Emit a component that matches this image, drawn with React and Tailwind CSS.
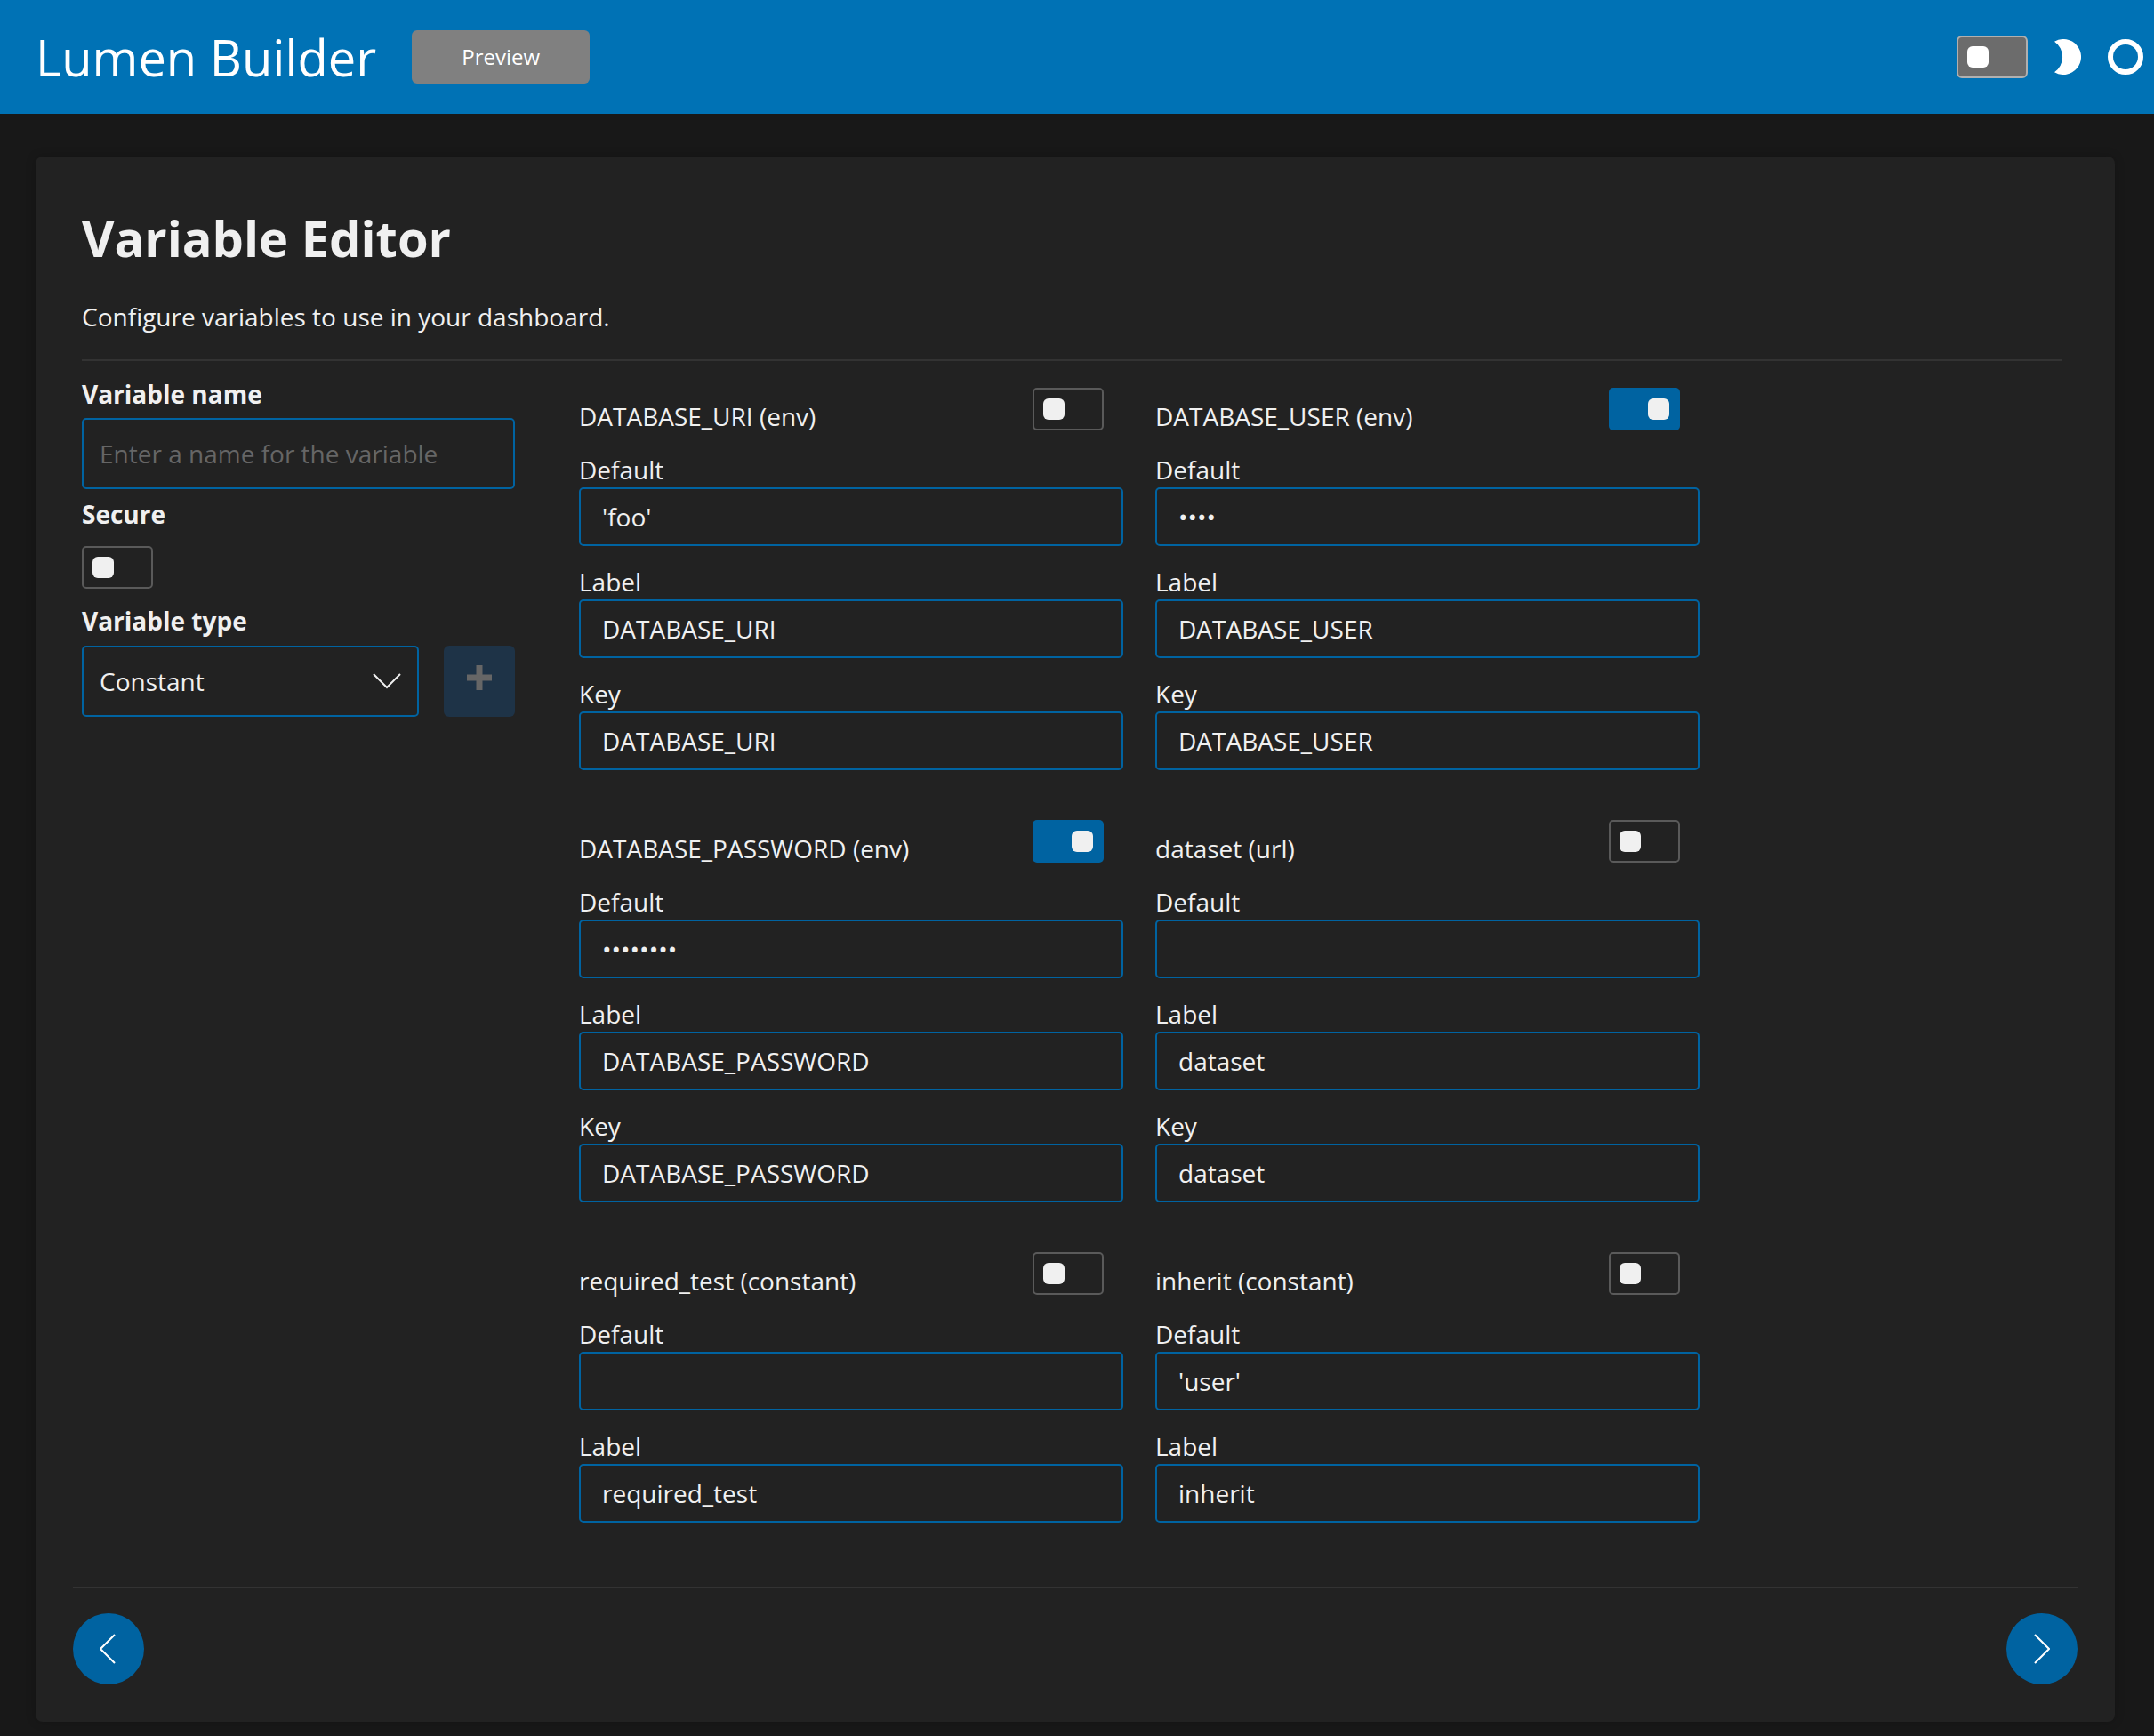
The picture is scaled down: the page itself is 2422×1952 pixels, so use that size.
import React from "react";

const variables = [
  { title: "DATABASE_URI (env)", on: false, fields: [["Default", "'foo'"], ["Label", "DATABASE_URI"], ["Key", "DATABASE_URI"]] },
  { title: "DATABASE_USER (env)", on: true, secret: true, fields: [["Default", "user"], ["Label", "DATABASE_USER"], ["Key", "DATABASE_USER"]] },
  { title: "DATABASE_PASSWORD (env)", on: true, secret: true, fields: [["Default", "password"], ["Label", "DATABASE_PASSWORD"], ["Key", "DATABASE_PASSWORD"]] },
  { title: "dataset (url)", on: false, fields: [["Default", ""], ["Label", "dataset"], ["Key", "dataset"]] },
  { title: "required_test (constant)", on: false, fields: [["Default", ""], ["Label", "required_test"]] },
  { title: "inherit (constant)", on: false, fields: [["Default", "'user'"], ["Label", "inherit"]] },
];

function Toggle({ on = false, className = "" }) {
  return (
    <div
      className={`flex h-[48px] w-[80px] shrink-0 items-center rounded-[5px] ${
        on ? "justify-end bg-[#0063a1] px-[12px]" : "justify-start border-2 border-[#5a5a5a] px-[10px]"
      } ${className}`}
    >
      <div className="h-[24px] w-[24px] rounded-[6px] bg-[#f0f0f0]" />
    </div>
  );
}

function VariableCard({ variable }) {
  return (
    <div className="mb-[34px] flex flex-col">
      <div className="flex h-[48px] items-end justify-between pr-[22px]">
        <span className="leading-[32px]">{variable.title}</span>
        <Toggle on={variable.on} className="self-start" />
      </div>
      <div className="mt-[26px] flex flex-col">
        {variable.fields.map(([label, value]) => (
          <div key={label} className="mb-[22px] flex flex-col">
            <label className="h-[38px] leading-[36px]">{label}</label>
            <input
              readOnly
              type={variable.secret && label === "Default" ? "password" : "text"}
              value={value}
              className="h-[66px] w-full rounded-[5px] border-2 border-[#0063a1] bg-transparent px-[24px] text-[#f0f0f0] outline-none"
            />
          </div>
        ))}
      </div>
    </div>
  );
}

export default function App() {
  return (
    <div className="min-h-[1952px] bg-[#181818] font-['Open_Sans',sans-serif] text-[28px] text-[#f0f0f0]">
      <header className="flex h-[128px] items-center bg-[#0072b5] pl-[40px] pr-[12px] text-white">
        <h1 className="text-[56px] font-normal leading-none">Lumen Builder</h1>
        <button className="ml-[40px] h-[60px] w-[200px] rounded-[6px] bg-[#808080] text-[24px] text-white">Preview</button>
        <div className="ml-auto flex items-center">
          <div className="flex h-[48px] w-[80px] items-center rounded-[6px] border-2 border-[#b0b0b0] bg-[#6c6c6c] px-[10px]">
            <div className="h-[24px] w-[24px] rounded-[6px] bg-white" />
          </div>
          <svg width="30" height="40" viewBox="0 0 30 40" className="ml-[30px]">
            <path d="M0 2.7A20 20 0 1 1 0 37.3A21 21 0 0 0 0 2.7Z" fill="#fff" />
          </svg>
          <div className="ml-[30px] h-[40px] w-[40px] rounded-full border-[6px] border-white" />
        </div>
      </header>

      <main className="ml-[40px] mr-[44px] mt-[48px] mb-[16px] flex h-[1760px] flex-col rounded-[8px] bg-[#222222] shadow-[0_0_12px_rgba(0,0,0,0.2)]">
        <div className="flex-1 pl-[52px] pr-[60px]">
          <h2 className="mt-[58px] text-[56px] font-bold leading-[66px]">Variable Editor</h2>
          <p className="mt-[37px] leading-[38px]">Configure variables to use in your dashboard.</p>
          <div className="mt-[29px] h-[2px] w-full bg-[#333333]" />

          <div className="mt-[18px] flex gap-[72px]">
            <div className="w-[487px] shrink-0">
              <div className="h-[38px] font-bold leading-[38px]">Variable name</div>
              <input
                placeholder="Enter a name for the variable"
                className="mt-[8px] h-[80px] w-full rounded-[5px] border-2 border-[#0063a1] bg-transparent px-[18px] outline-none placeholder:text-[#666666]"
              />
              <div className="mt-[9px] h-[38px] font-bold leading-[38px]">Secure</div>
              <Toggle className="mt-[17px]" />
              <div className="mt-[17px] h-[38px] font-bold leading-[38px]">Variable type</div>
              <div className="mt-[9px] flex gap-[28px]">
                <div className="flex h-[80px] flex-1 items-center justify-between rounded-[5px] border-2 border-[#0063a1] pl-[18px] pr-[18px]">
                  <span>Constant</span>
                  <svg width="32" height="18" viewBox="0 0 32 18" fill="none" stroke="#f0f0f0" strokeWidth="2">
                    <path d="M1 1L16 16L31 1" />
                  </svg>
                </div>
                <button className="flex h-[80px] w-[80px] items-start justify-center rounded-[6px] bg-[#1e3347] pt-[22px]">
                  <svg width="28" height="28" viewBox="0 0 28 28" fill="#666666">
                    <path d="M10.5 0h7v10.5H28v7H17.5V28h-7V17.5H0v-7h10.5z" />
                  </svg>
                </button>
              </div>
            </div>

            <div className="grid grid-cols-[612px_612px] gap-x-[36px] pt-[12px]">
              {variables.map((variable) => (
                <VariableCard key={variable.title} variable={variable} />
              ))}
            </div>
          </div>
        </div>

        <div className="mx-[42px] mb-[42px] border-t-2 border-[#333333] pt-[28px]">
          <div className="flex justify-between">
            <button className="flex h-[80px] w-[80px] items-center justify-center rounded-full bg-[#0063a1] pr-[2px]">
              <svg width="18" height="34" viewBox="0 0 18 34" fill="none" stroke="#fff" strokeWidth="2">
                <path d="M17 1L1 17L17 33" />
              </svg>
            </button>
            <button className="flex h-[80px] w-[80px] items-center justify-center rounded-full bg-[#0063a1]">
              <svg width="18" height="34" viewBox="0 0 18 34" fill="none" stroke="#fff" strokeWidth="2">
                <path d="M1 1L17 17L1 33" />
              </svg>
            </button>
          </div>
        </div>
      </main>
    </div>
  );
}
